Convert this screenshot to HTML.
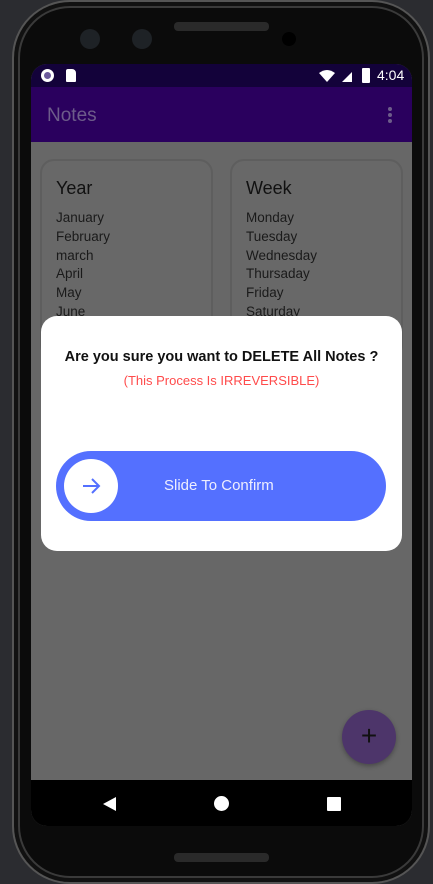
<!DOCTYPE html><html><head><style>
*{margin:0;padding:0;box-sizing:border-box}
body{width:433px;height:882px;background:#2b2c30;position:relative;overflow:hidden;font-family:"Liberation Sans",sans-serif}
.phone{position:absolute;left:12px;top:0;width:418px;height:884px;background:#0b0b0b;border-radius:58px;border:2px solid #555;box-shadow:inset 0 0 0 4px #111,inset 0 0 0 6px #3a3a3a}
.a{position:absolute}
.screen{position:absolute;left:31px;top:64px;width:381px;height:762px;border-radius:16px;overflow:hidden;background:#676767}
.card{position:absolute;top:17px;width:173px;height:200px;border:2px solid #5e5e5e;border-radius:14px;background:#686868}
.card h3{position:absolute;left:14px;top:17px;font-size:18px;font-weight:normal;color:#111}
.card div{position:absolute;left:14px;top:48px;font-size:13.5px;line-height:18.8px;color:#1a1a1a}
</style></head><body>
<div class="phone"></div>
<div class="a" style="left:174px;top:22px;width:95px;height:9px;background:#2a2a2a;border-radius:4px"></div>
<div class="a" style="left:80px;top:29px;width:20px;height:20px;border-radius:50%;background:#1e2226"></div>
<div class="a" style="left:132px;top:29px;width:20px;height:20px;border-radius:50%;background:#1e2226"></div>
<div class="a" style="left:282px;top:32px;width:14px;height:14px;border-radius:50%;background:#000"></div>
<div class="a" style="left:174px;top:853px;width:95px;height:9px;background:#2a2a2a;border-radius:4px"></div>
<div class="screen">
 <div class="a" style="left:0;top:0;width:381px;height:23px;background:#13023a"></div>
 <div class="a" style="left:10px;top:5px;width:13px;height:13px;border-radius:50%;background:#fff;border:3px solid #fff"><div style="width:7px;height:7px;border-radius:50%;background:#6c5a9c"></div></div>
 <div class="a" style="left:35px;top:5px;width:10px;height:13px;background:#fff;border-radius:2px 4px 1px 1px"></div>
 <svg class="a" style="left:288px;top:5px" width="50" height="14"><path d="M0 4 Q8 -2 16 4 L8 13Z" fill="#fff"/><path d="M23 13 L33 3 L33 13Z" fill="#fff"/></svg>
 <div class="a" style="left:331px;top:4px;width:8px;height:15px;background:#fff;border-radius:1px"></div>
 <div class="a" style="left:346px;top:3px;color:#fff;font-size:14px">4:04</div>
 <div class="a" style="left:0;top:23px;width:381px;height:55px;background:#2a005e"></div>
 <div class="a" style="left:16px;top:41px;color:#6d5c8a;font-size:19px">Notes</div>
 <div class="a" style="left:357px;top:43px;width:4px;height:4px;border-radius:50%;background:#6d5c8a;box-shadow:0 6px 0 #6d5c8a,0 12px 0 #6d5c8a"></div>
 <div style="position:absolute;left:0;top:78px;width:381px;height:640px">
  <div class="card" style="left:9px"><h3>Year</h3><div>January<br>February<br>march<br>April<br>May<br>June</div></div>
  <div class="card" style="left:199px"><h3>Week</h3><div>Monday<br>Tuesday<br>Wednesday<br>Thursaday<br>Friday<br>Saturday</div></div>
 </div>
 <div class="a" style="left:311px;top:646px;width:54px;height:54px;border-radius:50%;background:#4d356a;box-shadow:0 2px 5px rgba(0,0,0,.3);color:#111;font-size:28px;text-align:center;line-height:52px">+</div>
 <div class="a" style="left:0;top:716px;width:381px;height:46px;background:#000"></div>
 <svg class="a" style="left:70px;top:730px" width="20" height="20"><path d="M2 10 L15 3 L15 17Z" fill="#fff"/></svg>
 <div class="a" style="left:183px;top:732px;width:15px;height:15px;border-radius:50%;background:#fff"></div>
 <div class="a" style="left:296px;top:733px;width:14px;height:14px;background:#fff;border-radius:1px"></div>
</div>
<div class="a" style="left:41px;top:316px;width:361px;height:235px;background:#fff;border-radius:16px">
 <div class="a" style="left:0;top:33px;width:361px;text-align:center;font-size:14.5px;font-weight:bold;color:#111">Are you sure you want to DELETE All Notes ?</div>
 <div class="a" style="left:0;top:57px;width:361px;text-align:center;font-size:13px;color:#ff4b4b">(This Process Is IRREVERSIBLE)</div>
 <div class="a" style="left:15px;top:135px;width:330px;height:70px;border-radius:35px;background:#5470ff">
  <div class="a" style="left:8px;top:8px;width:54px;height:54px;border-radius:50%;background:#fff"></div>
  <svg class="a" style="left:25px;top:25px" width="20" height="20"><path d="M2 10 H17 M11 3 L18 10 L11 17" stroke="#5470ff" stroke-width="2" fill="none"/></svg>
  <div class="a" style="left:108px;top:26px;color:#eef;font-size:15px">Slide To Confirm</div>
 </div>
</div>
</body></html>
